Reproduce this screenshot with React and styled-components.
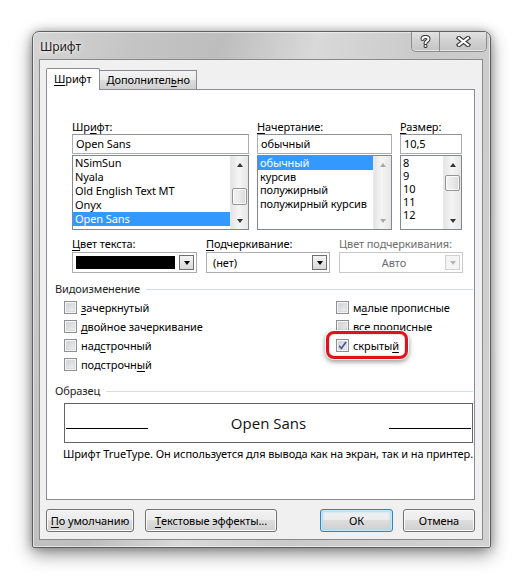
import React from "react";
import styled, { createGlobalStyle, css } from "styled-components";

const UI_FONT = `"Segoe UI", "Noto Sans", "DejaVu Sans", sans-serif`;

const GlobalStyle = createGlobalStyle`
  html, body {
    margin: 0;
    background: #fff;
  }
  body {
    font-family: ${UI_FONT};
    font-size: 11px;
    letter-spacing: -0.1px;
    color: #000;
  }
`;

const Stage = styled.div`
  box-sizing: border-box;
  width: 528px;
  height: 579px;
  padding: 31px 0 0 32px;
  overflow: hidden;
`;

const Window = styled.div`
  box-sizing: border-box;
  width: 459px;
  height: 517px;
  display: flex;
  flex-direction: column;
  padding: 0 7px 7px 6px;
  border: 1px solid #5f5f5f;
  border-radius: 7px 7px 2px 2px;
  background: linear-gradient(
    105deg,
    #d4d4d4 0%,
    #c4c4c4 18%,
    #bdbdbd 32%,
    #d9d9d9 48%,
    #cacaca 66%,
    #d2d2d2 100%
  );
  box-shadow: 0 0 0 1px rgba(255, 255, 255, 0.5) inset,
    0 6px 18px rgba(0, 0, 0, 0.45), 0 0 8px rgba(0, 0, 0, 0.25);
`;

const TitleBar = styled.div`
  height: 27px;
  display: flex;
  justify-content: space-between;
`;

const Title = styled.div`
  align-self: center;
  margin: 2px 0 0 1px;
  font-size: 12px;
  color: #1b1b1b;
  text-shadow: 0 0 6px #f4f4f4, 0 0 3px #f4f4f4;
`;

const CaptionGroup = styled.div`
  display: flex;
  height: 19px;
  margin-right: -4px;
  border: 1px solid #8c8c8c;
  border-top: none;
  border-radius: 0 0 5px 5px;
  overflow: hidden;
  background: linear-gradient(#e2e2e2, #cfcfcf 55%, #c4c4c4);
  box-shadow: inset 0 -1px 0 rgba(255, 255, 255, 0.6);
`;

const CaptionButton = styled.div`
  width: ${(p) => p.$width}px;
  display: flex;
  align-items: center;
  justify-content: center;
  & + & {
    border-left: 1px solid #8c8c8c;
  }
`;

const Client = styled.div`
  flex: 1;
  display: flex;
  flex-direction: column;
  padding: 8px 7px 7px 6px;
  border: 1px solid #8a8a8a;
  background: #f0f0f0;
`;

const TabStrip = styled.div`
  display: flex;
  align-items: flex-end;
  height: 21px;
  position: relative;
  z-index: 1;
`;

const Tab = styled.div`
  box-sizing: border-box;
  padding: 0 7px;
  border: 1px solid #898c95;
  border-bottom: none;
  ${(p) =>
    p.$active
      ? css`
          height: 22px;
          margin-bottom: -1px;
          line-height: 20px;
          background: #fff;
          border-radius: 2px 2px 0 0;
        `
      : css`
          height: 19px;
          margin-left: -1px;
          line-height: 18px;
          padding: 0 6px 0 7px;
          background: linear-gradient(#f3f3f3, #ebebeb 50%, #dddddd 50%, #cfcfcf);
        `}
`;

const Panel = styled.div`
  flex: 1;
  display: flex;
  flex-direction: column;
  padding: 29px 1px 0 8px;
  border: 1px solid #898c95;
  background: #fff;
`;

const Key = styled.span`
  text-decoration: underline;
  text-underline-offset: 2px;
`;

const Mn = ({ text, at }) =>
  at == null ? (
    text
  ) : (
    <>
      {text.slice(0, at)}
      <Key>{text[at]}</Key>
      {text.slice(at + 1)}
    </>
  );

const FieldGrid = styled.div`
  display: grid;
  grid-template-columns: ${(p) => p.$cols};
  column-gap: ${(p) => p.$gap || 8}px;
  margin-left: 17px;
  margin-top: ${(p) => p.$top || 0}px;
`;

const Field = styled.div`
  display: flex;
  flex-direction: column;
  min-width: 0;
`;

const FieldLabel = styled.div`
  line-height: 15px;
  height: 15px;
  white-space: nowrap;
  color: ${(p) => (p.$disabled ? "#6d6d6d" : "#000")};
`;

const TextBox = styled.div`
  box-sizing: border-box;
  height: 20px;
  padding: 0 3px;
  line-height: 18px;
  border: 1px solid #abadb3;
  border-top-color: #8e9199;
  white-space: nowrap;
`;

const ListBox = styled.div`
  box-sizing: border-box;
  height: 75px;
  margin-top: 1px;
  display: flex;
  border: 1px solid #828790;
  overflow: hidden;
`;

const ListItems = styled.div`
  flex: 1;
  min-width: 0;
`;

const ListItem = styled.div`
  height: ${(p) => p.$h}px;
  line-height: ${(p) => p.$h}px;
  padding-left: 2px;
  white-space: nowrap;
  ${(p) =>
    p.$selected &&
    css`
      background: #3399ff;
      color: #fff;
    `}
`;

const ScrollBar = styled.div`
  width: 17px;
  display: flex;
  flex-direction: column;
  background: linear-gradient(90deg, #e4e4e4, #f5f5f5 45%, #eeeeee 70%, #e6e6e6);
  border-left: 1px solid #e9e9e9;
`;

const ScrollArrow = styled.div`
  height: 17px;
  display: flex;
  align-items: center;
  justify-content: center;
  &::before {
    content: "";
    border-left: 3.5px solid transparent;
    border-right: 3.5px solid transparent;
    ${(p) =>
      p.$down
        ? css`
            border-top: 4px solid ${p.$disabled ? "#a8a8a8" : "#333"};
          `
        : css`
            border-bottom: 4px solid ${p.$disabled ? "#a8a8a8" : "#333"};
          `}
  }
`;

const ScrollTrack = styled.div`
  flex: 1;
  display: flex;
  flex-direction: column;
  align-items: center;
`;

const Thumb = styled.div`
  box-sizing: border-box;
  width: 15px;
  height: ${(p) => p.$size}px;
  margin-top: ${(p) => p.$offset}px;
  border: 1px solid #959595;
  border-radius: 2px;
  background: linear-gradient(90deg, #f3f3f3, #e9e9e9 50%, #d9d9d9);
  box-shadow: inset 0 0 0 1px rgba(255, 255, 255, 0.8);
`;

const Scroller = ({ thumb, disabled }) => (
  <ScrollBar>
    <ScrollArrow $disabled={disabled} />
    <ScrollTrack>{thumb && <Thumb $offset={thumb[0]} $size={thumb[1]} />}</ScrollTrack>
    <ScrollArrow $down $disabled={disabled} />
  </ScrollBar>
);

const Combo = styled.div`
  box-sizing: border-box;
  height: 21px;
  margin-top: 1px;
  display: flex;
  align-items: center;
  padding: 0 2px 0 3px;
  border: 1px solid ${(p) => (p.$disabled ? "#c9c9c9" : "#abadb3")};
  background: #fff;
  color: ${(p) => (p.$disabled ? "#6d6d6d" : "#000")};
`;

const ComboValue = styled.div`
  flex: 1;
  padding-left: ${(p) => (p.$center ? 0 : 3)}px;
  text-align: ${(p) => (p.$center ? "center" : "left")};
  white-space: nowrap;
`;

const Swatch = styled.div`
  flex: 1;
  height: 13px;
  margin-right: 4px;
  background: ${(p) => p.$color};
`;

const DropButton = styled.div`
  box-sizing: border-box;
  width: 15px;
  height: 15px;
  display: flex;
  align-items: center;
  justify-content: center;
  border: 1px solid ${(p) => (p.$disabled ? "#d0d0d0" : "#707070")};
  background: ${(p) =>
    p.$disabled ? "#f4f4f4" : "linear-gradient(#f4f4f4, #e6e6e6 50%, #d8d8d8)"};
  &::before {
    content: "";
    border-left: 3.5px solid transparent;
    border-right: 3.5px solid transparent;
    border-top: 4px solid ${(p) => (p.$disabled ? "#b5b5b5" : "#000")};
    margin-top: 1px;
  }
`;

const Group = styled.div`
  margin: ${(p) => p.$top}px 0 0 0;
`;

const GroupHeader = styled.div`
  display: flex;
  align-items: center;
  height: 15px;
  line-height: 15px;
  color: #1e1e1e;
  &::after {
    content: "";
    flex: 1;
    height: 1px;
    margin: 1px 0 0 6px;
    background: #d5dfe5;
  }
`;

const Effects = styled.div`
  display: grid;
  grid-template-columns: 281px 1fr;
  padding-top: 2px;
`;

const EffectColumn = styled.div`
  display: flex;
  flex-direction: column;
  padding-left: ${(p) => p.$pad || 0}px;
`;

const CheckRow = styled.div`
  position: relative;
  height: 19px;
  display: flex;
  align-items: center;
  gap: 4px;
  white-space: nowrap;
`;

const CheckBox = styled.div`
  box-sizing: border-box;
  width: 13px;
  height: 13px;
  flex: none;
  display: flex;
  align-items: center;
  justify-content: center;
  border: 1px solid #8e8f8f;
  background: linear-gradient(135deg, #c6c9ce, #e3e4e6 60%, #f4f4f4);
  box-shadow: inset 0 0 0 1px #f6f6f6, inset 0 0 0 2px #d8dade;
`;

// rounded red frame drawn over a row to call it out
const Callout = styled.div`
  position: absolute;
  left: -10px;
  top: -5px;
  width: 82px;
  height: 28px;
  box-sizing: border-box;
  border: 3px solid #e2121b;
  border-radius: 8px;
  box-shadow: 0 0 0 1px rgba(255, 255, 255, 0.9), 0 2px 5px 1px rgba(0, 0, 0, 0.4),
    inset 0 0 2px rgba(0, 0, 0, 0.35);
  pointer-events: none;
`;

const Check = ({ label, at, checked, callout }) => (
  <CheckRow>
    {callout && <Callout />}
    <CheckBox>
      {checked && (
        <svg width="9" height="9" viewBox="0 0 9 9">
          <path d="M1.2 4.8 L3.4 7.4 L8 1" fill="none" stroke="#3f5693" strokeWidth="1.6" />
        </svg>
      )}
    </CheckBox>
    <span>
      <Mn text={label} at={at} />
    </span>
  </CheckRow>
);

const Preview = styled.div`
  box-sizing: border-box;
  height: 40px;
  margin: 5px 0 0 9px;
  padding: 0 1px;
  display: grid;
  grid-template-columns: 82px 1fr 82px;
  align-items: center;
  border: 1px solid #646464;
`;

const PreviewRule = styled.div`
  height: 1px;
  margin-top: 11px;
  background: #000;
`;

const PreviewText = styled.div`
  text-align: center;
  font-family: "Open Sans", sans-serif;
  font-size: 15px;
  letter-spacing: 0;
  color: #111;
`;

const Note = styled.div`
  margin: 3px 0 0 8px;
  line-height: 15px;
  white-space: nowrap;
`;

const ButtonRow = styled.div`
  display: flex;
  justify-content: space-between;
  margin-top: 9px;
`;

const ButtonGroup = styled.div`
  display: flex;
  gap: ${(p) => p.$gap}px;
`;

const Button = styled.div`
  box-sizing: border-box;
  width: ${(p) => p.$w}px;
  height: 23px;
  display: flex;
  align-items: center;
  justify-content: center;
  border: 1px solid #707070;
  border-radius: 3px;
  white-space: nowrap;
  background: linear-gradient(#f2f2f2, #ebebeb 50%, #dddddd 50%, #cfcfcf);
  box-shadow: inset 0 0 0 1px #fbfbfb;
  ${(p) =>
    p.$default &&
    css`
      border-color: #3c7fb1;
      box-shadow: inset 0 0 0 1px #c4e9fb, inset 0 0 2px 2px #a6dbf6;
    `}
`;

const HelpGlyph = () => (
  <svg width="11" height="13" viewBox="0 0 11 13">
    <g fill="none" strokeLinecap="round">
      <path d="M2.5 4 C2.5 1.2 8.5 1.2 8.5 4 C8.5 6 5.5 6 5.5 8.2" stroke="#3a3a3a" strokeWidth="4" />
      <path d="M2.5 4 C2.5 1.2 8.5 1.2 8.5 4 C8.5 6 5.5 6 5.5 8.2" stroke="#fff" strokeWidth="2" />
      <path d="M5.5 11 L5.5 11.1" stroke="#3a3a3a" strokeWidth="4" />
      <path d="M5.5 11 L5.5 11.1" stroke="#fff" strokeWidth="2" />
    </g>
  </svg>
);

const CloseGlyph = () => (
  <svg width="15" height="11" viewBox="0 0 15 11">
    <g fill="none" strokeLinecap="square">
      <path d="M3 2 L12 9 M12 2 L3 9" stroke="#3a3a3a" strokeWidth="4.4" />
      <path d="M3 2 L12 9 M12 2 L3 9" stroke="#fff" strokeWidth="2.2" />
    </g>
  </svg>
);

const fonts = ["NSimSun", "Nyala", "Old English Text MT", "Onyx", "Open Sans"];
const styles = ["обычный", "курсив", "полужирный", "полужирный курсив"];
const sizes = ["8", "9", "10", "11", "12"];

const App = () => (
  <Stage>
    <GlobalStyle />
    <Window>
      <TitleBar>
        <Title>Шрифт</Title>
        <CaptionGroup>
          <CaptionButton $width={27}>
            <HelpGlyph />
          </CaptionButton>
          <CaptionButton $width={46}>
            <CloseGlyph />
          </CaptionButton>
        </CaptionGroup>
      </TitleBar>

      <Client>
        <TabStrip>
          <Tab $active>
            <Mn text="Шрифт" at={0} />
          </Tab>
          <Tab>
            <Mn text="Дополнительно" at={10} />
          </Tab>
        </TabStrip>

        <Panel>
          <FieldGrid $cols="177px 135px 62px">
            <Field>
              <FieldLabel>
                <Mn text="Шрифт:" at={2} />
              </FieldLabel>
              <TextBox>Open Sans</TextBox>
              <ListBox>
                <ListItems>
                  {fonts.map((f) => (
                    <ListItem key={f} $h={14} $selected={f === "Open Sans"}>
                      {f}
                    </ListItem>
                  ))}
                </ListItems>
                <Scroller thumb={[15, 17]} />
              </ListBox>
            </Field>
            <Field>
              <FieldLabel>
                <Mn text="Начертание:" at={0} />
              </FieldLabel>
              <TextBox>обычный</TextBox>
              <ListBox>
                <ListItems>
                  {styles.map((s) => (
                    <ListItem key={s} $h={13.5} $selected={s === "обычный"}>
                      {s}
                    </ListItem>
                  ))}
                </ListItems>
                <Scroller disabled />
              </ListBox>
            </Field>
            <Field>
              <FieldLabel>
                <Mn text="Размер:" at={0} />
              </FieldLabel>
              <TextBox>10,5</TextBox>
              <ListBox>
                <ListItems>
                  {sizes.map((s) => (
                    <ListItem key={s} $h={13}>
                      {s}
                    </ListItem>
                  ))}
                </ListItems>
                <Scroller thumb={[2, 16]} />
              </ListBox>
            </Field>
          </FieldGrid>

          <FieldGrid $cols="125px 124px 124px" $gap={9} $top={6}>
            <Field>
              <FieldLabel>
                <Mn text="Цвет текста:" at={0} />
              </FieldLabel>
              <Combo>
                <Swatch $color="#000" />
                <DropButton />
              </Combo>
            </Field>
            <Field>
              <FieldLabel>
                <Mn text="Подчеркивание:" at={0} />
              </FieldLabel>
              <Combo>
                <ComboValue>(нет)</ComboValue>
                <DropButton />
              </Combo>
            </Field>
            <Field>
              <FieldLabel $disabled>Цвет подчеркивания:</FieldLabel>
              <Combo $disabled>
                <ComboValue $center>Авто</ComboValue>
                <DropButton $disabled />
              </Combo>
            </Field>
          </FieldGrid>

          <Group $top={8}>
            <GroupHeader>Видоизменение</GroupHeader>
            <Effects>
              <EffectColumn $pad={9}>
                <Check label="зачеркнутый" at={0} />
                <Check label="двойное зачеркивание" at={0} />
                <Check label="надстрочный" at={3} />
                <Check label="подстрочный" at={9} />
              </EffectColumn>
              <EffectColumn>
                <Check label="малые прописные" at={1} />
                <Check label="все прописные" at={0} />
                <Check label="скрытый" at={6} checked callout />
              </EffectColumn>
            </Effects>
          </Group>

          <Group $top={9}>
            <GroupHeader>Образец</GroupHeader>
            <Preview>
              <PreviewRule />
              <PreviewText>Open Sans</PreviewText>
              <PreviewRule />
            </Preview>
            <Note>Шрифт TrueType. Он используется для вывода как на экран, так и на принтер.</Note>
          </Group>
        </Panel>

        <ButtonRow>
          <ButtonGroup $gap={11}>
            <Button $w={88}>
              <Mn text="По умолчанию" at={0} />
            </Button>
            <Button $w={132}>
              <Mn text="Текстовые эффекты..." at={0} />
            </Button>
          </ButtonGroup>
          <ButtonGroup $gap={10}>
            <Button $w={73} $default>
              ОК
            </Button>
            <Button $w={72}>Отмена</Button>
          </ButtonGroup>
        </ButtonRow>
      </Client>
    </Window>
  </Stage>
);

export default App;
